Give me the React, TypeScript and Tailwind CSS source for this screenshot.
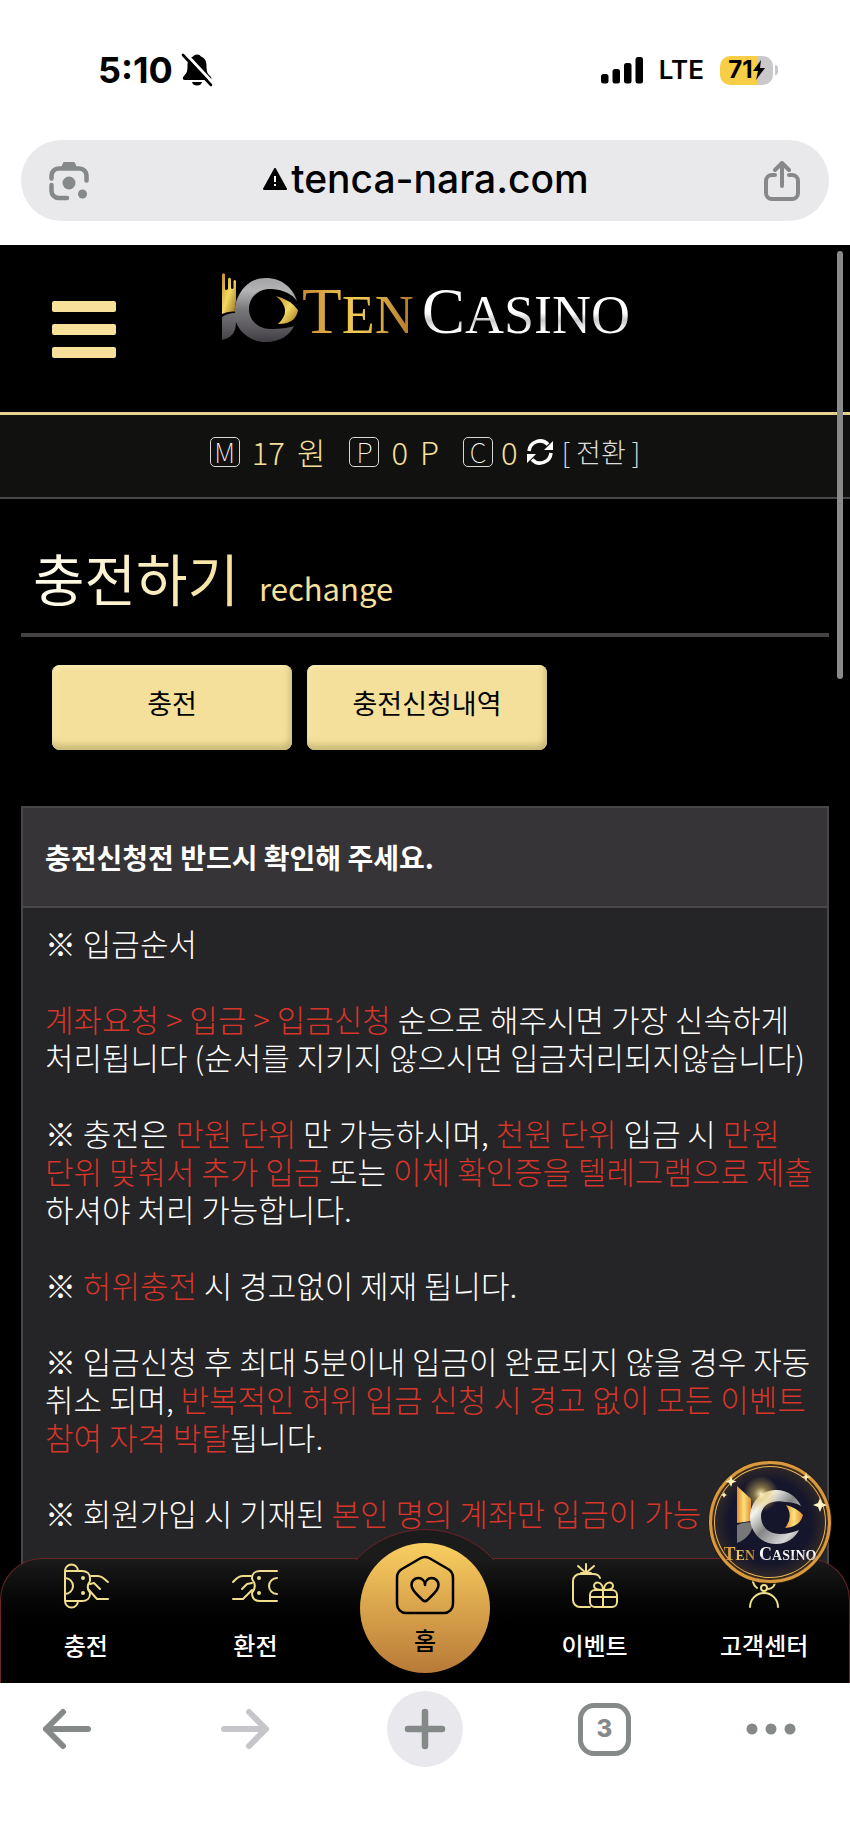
import { ReactNode } from "react";

interface NavItem {
  label: string;
  icon: ReactNode;
}

const line = {
  fill: "none",
  stroke: "currentColor",
  strokeLinecap: "round" as const,
  strokeLinejoin: "round" as const,
};

const BellOff = () => (
  <svg viewBox="0 0 32 34" className="h-[34px] w-[32px]" aria-hidden="true">
    <path d="M16 1.500c2 0 3 .8 4 2 4 1.400 5.500 5 5.500 9.500 0 7 1.500 8 4 10.500 1.700 1.700.8 3.500-1.500 3.500H4c-2.300 0-2.700-1.800-1.500-3.500C5 20.500 6.500 20 6.500 13c0-4.500 1.500-8.100 5.500-9.500 1-1.200 2-2 4-2zM11 29h10c-.5 2.300-2.500 3.600-5 3.600s-4.500-1.300-5-3.600z" />
    <path d="M5 1l27 29" stroke="#fff" strokeWidth="3" />
    <path d="M2 2l28 30" stroke="#000" strokeWidth="2.600" strokeLinecap="round" />
  </svg>
);

const Signal = () => (
  <svg viewBox="0 0 42 27" className="h-[27px] w-[42px]" aria-hidden="true">
    <rect x="0" y="17" width="7.500" height="9.500" rx="2.500" />
    <rect x="11.500" y="12" width="7.500" height="14.500" rx="2.500" />
    <rect x="23" y="6" width="7.500" height="20.500" rx="2.500" />
    <rect x="34.500" y="0" width="7.500" height="26.500" rx="2.500" />
  </svg>
);

const Lens = () => (
  <svg viewBox="0 0 40 40" className="size-10 text-[#858988]" {...line} strokeWidth="4.500" aria-hidden="true">
    <path d="M2.500 17.500v-3a7 7 0 0 1 7-7h21a7 7 0 0 1 7 7v5M2.500 24v6a7 7 0 0 0 7 7H18" />
    <path d="M13 7l2-5h10l2 5z" fill="currentColor" strokeWidth="2" />
    <circle cx="20" cy="22" r="6.500" fill="currentColor" stroke="none" />
    <circle cx="33.500" cy="33" r="4.500" fill="currentColor" stroke="none" />
  </svg>
);

const Share = () => (
  <svg viewBox="0 0 38 40" className="h-10 w-[38px] text-[#87888a]" {...line} strokeWidth="4" aria-hidden="true">
    <path d="M12 14H9a6 6 0 0 0-6 6v12a6 6 0 0 0 6 6h20a6 6 0 0 0 6-6V20a6 6 0 0 0-6-6h-3M19 25V3M12 9l7-7 7 7" />
  </svg>
);

const LogoMark = ({ className }: { className: string }) => (
  <svg viewBox="0 0 76 70" className={className} aria-hidden="true">
    <defs>
      <linearGradient id="silver" x1="0" y1="0" x2="0" y2="1">
        <stop offset="0" stopColor="#a3a3a6" />
        <stop offset=".2" stopColor="#b4b4b7" />
        <stop offset=".5" stopColor="#77777a" />
        <stop offset=".75" stopColor="#5e5c60" />
        <stop offset="1" stopColor="#403e42" />
      </linearGradient>
      <linearGradient id="gold" x1="0" y1="0" x2="1" y2="1">
        <stop offset="0" stopColor="#c58b2c" />
        <stop offset=".5" stopColor="#f3da62" />
        <stop offset="1" stopColor="#9a6c22" />
      </linearGradient>
    </defs>
    <path fill="url(#gold)" d="M0 1.500q1.500-2.500 3 0V16q1 2 3 0V6q1.500-2.500 3 0v9q1 2 2.500 0V8q1.500-2 2.500 0v20q-1.500 5-1 10.500Q5 38 0 41z" />
    <path fill="url(#silver)" d="M0 44q6-4 13-4-1-9 4-18C23 11 32 5 44 5c16 0 27 10 31 23-5-7-13-11-25-12-13-1-23 8-23 20 0 11 9 20 21 20 10 0 19-1 24-3-4 9-14 16-28 16-15 0-26-9-30-20 0 10-4 16-14 18z" />
    <path fill="url(#gold)" d="M54 23q15 4 22 14-2 14-20 14 15-14-2-28z" />
  </svg>
);

// coin artwork used on the floating badge
const BadgeMark = () => (
  <svg viewBox="0 0 122 80" className="h-20 w-[122px]" aria-hidden="true">
    <defs>
      <linearGradient id="chrome" x1="0" y1="0" x2="1" y2="1">
        <stop offset="0" stopColor="#8c8c8c" />
        <stop offset=".25" stopColor="#f4f4f0" />
        <stop offset=".5" stopColor="#858585" />
        <stop offset=".8" stopColor="#d6d6d6" />
        <stop offset="1" stopColor="#6f6f6f" />
      </linearGradient>
      <linearGradient id="flame" x1="0" y1="0" x2="1" y2="0">
        <stop offset="0" stopColor="#e58a35" />
        <stop offset=".5" stopColor="#ffe27a" />
        <stop offset="1" stopColor="#e08a35" />
      </linearGradient>
      <radialGradient id="glow">
        <stop offset="0" stopColor="#fff6c8" />
        <stop offset=".4" stopColor="#e8c860" stopOpacity=".5" />
        <stop offset="1" stopColor="#e8c860" stopOpacity="0" />
      </radialGradient>
    </defs>
    <path fill="url(#flame)" d="M28 22l14 13v22l-14 2z" />
    <path fill="#777" d="M28 61q8-4 16-2-1 14-16 20z" />
    <path fill="url(#chrome)" d="M67 26c12 0 21 7 25 16-5-3-10-4-16-4-14-3-24 4-24 14 0 11 8 18 19 18 7 0 14-2 19-4-4 8-12 14-23 14-15 0-26-12-26-27s11-27 26-27z" />
    <path fill="url(#flame)" d="M77 41q11 3 17 10-3 12-18 13 9-11 1-23z" />
    <circle cx="52" cy="30" r="18" fill="url(#glow)" />
    <path fill="#fff3c4" d="M111 34l2 5 5 2-5 2-2 5-2-5-5-2 5-2zM22 12l1.500 4 4 1.500-4 1.500-1.500 4-1.500-4-4-1.500 4-1.500zM97 8l1 4 4 1-4 1-1 4-1-4-4-1 4-1zM15 28l1 2 2 1-2 1-1 2-1-2-2-1 2-1z" />
  </svg>
);

const LogoText = ({ small = false }: { small?: boolean }) => (
  <span
    className={
      small
        ? "flex items-baseline gap-1 font-['Liberation_Serif',serif] text-lg leading-5 font-bold"
        : "flex items-baseline gap-2 font-['Liberation_Serif',serif] text-[65px] leading-[68px]"
    }
  >
    <span className="bg-linear-to-r from-[#c98a35] via-[#f3cf55] to-[#b0752b] bg-clip-text text-transparent">
      T<span className={small ? "text-sm" : "text-[54px]"}>EN</span>
    </span>
    <span className="bg-linear-to-b from-white from-50% via-[#c9c9cd] via-60% to-white to-75% bg-clip-text text-transparent">
      C<span className={small ? "text-sm" : "text-[54px]"}>ASINO</span>
    </span>
  </span>
);

const Coin = ({ children }: { children: string }) => (
  <span className="flex size-[30px] items-center justify-center rounded-[5px] border border-[#d8d8d8] text-[27px] leading-7 font-thin text-white">
    {children}
  </span>
);

const Refresh = () => (
  <svg viewBox="0 0 28 28" className="size-7 text-white" {...line} strokeLinecap="butt" strokeWidth="3.500" aria-hidden="true">
    <path d="M3 13a11 11 0 0 1 19-6.500M25 15a11 11 0 0 1-19 6.500" />
    <path d="M27 3v9h-9zM1 25v-9h9z" fill="currentColor" stroke="none" />
  </svg>
);

const DepositIcon = () => (
  <svg viewBox="0 0 46 46" className="size-[46px]" {...line} strokeWidth="2" aria-hidden="true">
    <path d="M2 8v30M2 8a6 6 0 0 1 13 0M2 38a6 6 0 0 0 13 0M2 8h17c5 0 8 3 8 7v3c-3 4-3 8 0 12v1c0 4-3 7-8 7H2M2 15a8 8 0 0 1 0 16" />
    <path d="M28 13h7c5 0 6 3 10 6M27 21l4-1 6 6M25 26l9 10h11" />
    <circle cx="20" cy="15" r="1" fill="currentColor" />
    <circle cx="20" cy="30" r="1" fill="currentColor" />
  </svg>
);

const WithdrawIcon = () => (
  <svg viewBox="0 0 46 46" className="size-[46px]" {...line} strokeWidth="2" aria-hidden="true">
    <path d="M45 8H28c-5 0-8 3-8 7v1c4 5 4 9 0 14 0 5 3 8 8 8h17M45 15a8 8 0 0 0 0 16" />
    <path d="M1 19c3-3 5-6 10-6h8M10 26l5-5 5-1M1 36h10l9-9" />
    <circle cx="27" cy="15" r="1" fill="currentColor" />
    <circle cx="27" cy="30" r="1" fill="currentColor" />
  </svg>
);

const EventIcon = () => (
  <svg viewBox="0 0 46 46" className="size-[46px]" {...line} strokeWidth="2" aria-hidden="true">
    <path d="M18 44H8a7 7 0 0 1-7-7V18a7 7 0 0 1 7-7h13c4 0 6 1 7 4M14 10V1M14 10L6 3M14 10l8-7M9 10h10" />
    <rect x="18" y="27" width="27" height="17" rx="5" />
    <path d="M31 27v17M18 34h27M31 27c-4 0-9-1-9-4 0-5 8-5 9 3zM32 27c4 0 9-1 9-4 0-5-8-5-9 3z" />
  </svg>
);

const SupportIcon = () => (
  <svg viewBox="0 0 46 46" className="size-[46px]" {...line} strokeWidth="2" aria-hidden="true">
    <path d="M9 44a14 14 0 0 1 28 0M12 18a11 11 0 1 1 22 0c0 5-3 8-7 8M12 19q1 4 4 6" />
    <circle cx="23" cy="25" r="3" />
  </svg>
);

const HomeIcon = () => (
  <svg viewBox="0 0 60 60" className="size-[60px]" {...line} strokeWidth="2.500" aria-hidden="true">
    <path d="M25 3.500a10 10 0 0 1 10 0l18 10.500a10 10 0 0 1 5 8.700V49a9 9 0 0 1-9 9H11a9 9 0 0 1-9-9V22.700A10 10 0 0 1 7 14z" />
    <path d="M30 30c0-4-3-7-6.500-7-4 0-7 3-7 7 0 6 6.500 10 11 15q2.500 2.500 5 0c4.500-5 11-9 11-15 0-4-3-7-7-7-3.500 0-6.500 3-6.500 7z" />
  </svg>
);

const leftItems: NavItem[] = [
  { label: "충전", icon: <DepositIcon /> },
  { label: "환전", icon: <WithdrawIcon /> },
];

const rightItems: NavItem[] = [
  { label: "이벤트", icon: <EventIcon /> },
  { label: "고객센터", icon: <SupportIcon /> },
];

const NavLink = ({ item }: { item: NavItem }) => (
  <a href="#" className="flex flex-1 flex-col items-center gap-5 pt-1 text-[#f0dd8e]">
    {item.icon}
    <span className="text-2xl leading-8 font-medium whitespace-nowrap text-white">{item.label}</span>
  </a>
);

const Red = ({ children }: { children: ReactNode }) => <span className="text-[#d5352a]">{children}</span>;

const StatusBar = () => (
  <div className="flex h-[140px] items-center justify-between pr-[72px] pl-[98px] font-['Inter',sans-serif]">
    <div className="flex items-center gap-2">
      <span className="text-[36px] leading-10 font-bold">5:10</span>
      <BellOff />
    </div>
    <div className="flex items-center gap-4">
      <Signal />
      <span className="text-[26px] leading-10 font-semibold">LTE</span>
      <span className="flex items-center gap-[2px]">
        <span className="flex h-[29px] w-[53px] items-center justify-center rounded-[10px] bg-linear-to-r from-[#f8ce46] from-70% to-[#c9c9cb] to-70% text-2xl leading-7 font-bold">
          71
          <svg viewBox="0 0 12 20" className="h-5 w-3" aria-hidden="true">
            <path d="M8 0L0 11h5L3 20l9-12H7z" />
          </svg>
        </span>
        <span className="h-[10px] w-[3px] rounded-r-full bg-[#c9c9cb]" />
      </span>
    </div>
  </div>
);

const AddressBar = () => (
  <div className="px-[21px] pb-6">
    <div className="flex h-[81px] items-center justify-between rounded-full bg-[#e9e9eb] px-7">
      <button aria-label="Lens"><Lens /></button>
      <div className="flex items-center gap-1 pb-1 font-['Inter',sans-serif]">
        <svg viewBox="0 0 24 22" className="h-[22px] w-6" aria-hidden="true">
          <path d="M12 1l11 20H1z" stroke="#000" strokeWidth="2" strokeLinejoin="round" />
          <path d="M12 8v6M12 16v2" stroke="#fff" strokeWidth="2" />
        </svg>
        <span className="text-[39px] leading-[48px] font-medium">tenca-nara.com</span>
      </div>
      <button aria-label="Share"><Share /></button>
    </div>
  </div>
);

const SiteHeader = () => (
  <header>
    <div className="flex h-[167px] items-start px-[52px] pt-7">
      <button aria-label="Menu" className="mt-7 flex w-16 flex-col gap-3">
        <span className="h-[11px] rounded-xs bg-[#f6e09a]" />
        <span className="h-[11px] rounded-xs bg-[#f6e09a]" />
        <span className="h-[11px] rounded-xs bg-[#f6e09a]" />
      </button>
      <a href="#" aria-label="Ten Casino" className="ml-[106px] flex items-start gap-1">
        <LogoMark className="h-[70px] w-[76px]" />
        <span className="pt-1"><LogoText /></span>
      </a>
    </div>
    <div className="flex h-[87px] items-center justify-center gap-6 border-t-[3px] border-b-2 border-t-[#e6d38d] border-b-[#484848] bg-[#11110f] pb-2 text-[31px] leading-10 font-light text-[#f6e09a]">
      <span className="flex items-center gap-3">
        <Coin>M</Coin>
        <span>17</span>
        <span>원</span>
      </span>
      <span className="flex items-center gap-3">
        <Coin>P</Coin>
        <span>0</span>
        <span>P</span>
      </span>
      <span className="flex items-center gap-2">
        <Coin>C</Coin>0
        <Refresh />
        <button className="text-[27px] text-[#dddddd]">[ 전환 ]</button>
      </span>
    </div>
  </header>
);

const App = () => {
  return (
    <div className="flex h-screen flex-col bg-white font-['Noto_Sans_CJK_KR',sans-serif] text-black">
      <StatusBar />
      <AddressBar />

      <div className="relative min-h-0 flex-1 overflow-hidden bg-black">
        <div className="h-full overflow-y-auto [scrollbar-width:none]">
          <SiteHeader />
          <main className="px-[21px] pt-9 text-white">
            <h1 className="flex h-[102px] items-baseline gap-5 border-b-4 border-[#454244] pl-3 leading-[84px]">
              <span className="bg-linear-to-r from-[#fffdf0] to-[#f6e09a] bg-clip-text text-[56px] font-normal text-transparent">충전하기</span>
              <span className="text-[31px] font-normal text-[#f6e09a]">rechange</span>
            </h1>

            <div className="mt-7 flex gap-[15px] px-[31px]">
              {["충전", "충전신청내역"].map((label) => (
                <button
                  key={label}
                  className="h-[85px] w-60 rounded-lg bg-[#f4e09b] pb-2 text-[27px] text-black shadow-[inset_-2px_-5px_6px_#c9b878,inset_2px_2px_4px_#fbeebb]"
                >
                  {label}
                </button>
              ))}
            </div>

            <section className="mt-14 border-2 border-[#484648] bg-[#252426]">
              <h2 className="border-b-2 border-[#484648] bg-[#363436] px-[22px] py-[29px] text-[28px] leading-10 font-bold">
                충전신청전 반드시 확인해 주세요.
              </h2>
              <div className="flex flex-col gap-[38px] pt-4 pb-40 pl-[22px] text-[31px] leading-[38px] font-light break-keep">
                <p>※ 입금순서</p>
                <p>
                  <Red>계좌요청 &gt; 입금 &gt; 입금신청</Red> 순으로 해주시면 가장 신속하게 처리됩니다 (순서를 지키지 않으시면 입금처리되지않습니다)
                </p>
                <p>
                  ※ 충전은 <Red>만원 단위</Red> 만 가능하시며, <Red>천원 단위</Red> 입금 시 <Red>만원 단위 맞춰서 추가 입금</Red> 또는{" "}
                  <Red>이체 확인증을 텔레그램으로 제출</Red> 하셔야 처리 가능합니다.
                </p>
                <p>
                  ※ <Red>허위충전</Red> 시 경고없이 제재 됩니다.
                </p>
                <p>
                  ※ 입금신청 후 최대 5분이내 입금이 완료되지 않을 경우 자동 취소 되며, <Red>반복적인 허위 입금 신청 시 경고 없이 모든 이벤트 참여 자격 박탈</Red>됩니다.
                </p>
                <p>
                  ※ 회원가입 시 기재된 <Red>본인 명의 계좌만 입금이 가능</Red>
                </p>
              </div>
            </section>
          </main>
        </div>

        <div className="absolute top-[6px] right-[7px] h-[428px] w-[6px] rounded-full bg-[#8a8a8a]" />

        <nav className="absolute inset-x-0 bottom-0">
          <div className="flex h-[125px] rounded-t-[42px] border border-b-0 border-[#6b2427] bg-linear-to-b from-[#1c1b1c] to-black to-75%">
            {leftItems.map((item) => <NavLink key={item.label} item={item} />)}
            <div className="relative flex flex-1 justify-center">
              <div className="absolute bottom-[123px] left-1/2 h-[31px] w-[140px] -translate-x-1/2 overflow-hidden">
                <div className="absolute top-0 left-1/2 size-[188px] -translate-x-1/2 rounded-full border border-[#6b2427] bg-[#1c1b1c]" />
              </div>
              <a
                href="#"
                className="relative -mt-4 flex size-[130px] shrink-0 flex-col items-center rounded-full bg-linear-to-b from-[#f9cf60] to-[#b87a38] pt-3 text-black"
              >
                <HomeIcon />
                <span className="text-2xl leading-[50px] font-medium">홈</span>
              </a>
            </div>
            {rightItems.map((item) => <NavLink key={item.label} item={item} />)}
          </div>
        </nav>

        <a
          href="#"
          aria-label="Ten Casino"
          className="absolute right-[19px] bottom-[100px] flex size-[122px] flex-col items-center rounded-full border-[3px] border-[#d9993f] bg-radial from-[#15152b] from-50% to-[#332a26] to-70% shadow-[0_0_0_1px_#2a1d10,inset_0_0_0_2px_#3c2a18,inset_0_0_0_3px_#e6b45a]"
        >
          <BadgeMark />
          <LogoText small />
        </a>
      </div>

      <div className="flex h-[165px] items-start justify-between px-7 pt-2 text-[#858988]">
        <button aria-label="Back" className="flex size-[76px] items-center justify-center">
          <svg viewBox="0 0 52 42" className="h-[42px] w-[52px]" {...line} strokeWidth="6" aria-hidden="true">
            <path d="M48 21H6M23 4L6 21l17 17" />
          </svg>
        </button>
        <button aria-label="Forward" className="flex size-[76px] items-center justify-center text-[#c6c5c9]">
          <svg viewBox="0 0 52 42" className="h-[42px] w-[52px]" {...line} strokeWidth="6" aria-hidden="true">
            <path d="M4 21h42M29 4l17 17-17 17" />
          </svg>
        </button>
        <button aria-label="New tab" className="flex size-[76px] items-center justify-center rounded-full bg-[#e9e8ec]">
          <svg viewBox="0 0 42 42" className="size-[42px]" {...line} strokeWidth="6.500" aria-hidden="true">
            <path d="M21 4v34M4 21h34" />
          </svg>
        </button>
        <button aria-label="Tabs" className="flex size-[76px] items-center justify-center">
          <span className="flex size-[53px] items-center justify-center rounded-2xl border-[5px] border-current font-['Inter',sans-serif] text-2xl font-extrabold">
            3
          </span>
        </button>
        <button aria-label="More" className="flex size-[76px] items-center">
          <svg viewBox="0 0 50 12" className="h-3 w-[50px]" fill="currentColor" aria-hidden="true">
            <circle cx="6" cy="6" r="5.500" />
            <circle cx="25" cy="6" r="5.500" />
            <circle cx="44" cy="6" r="5.500" />
          </svg>
        </button>
      </div>
    </div>
  );
};

export default App;
